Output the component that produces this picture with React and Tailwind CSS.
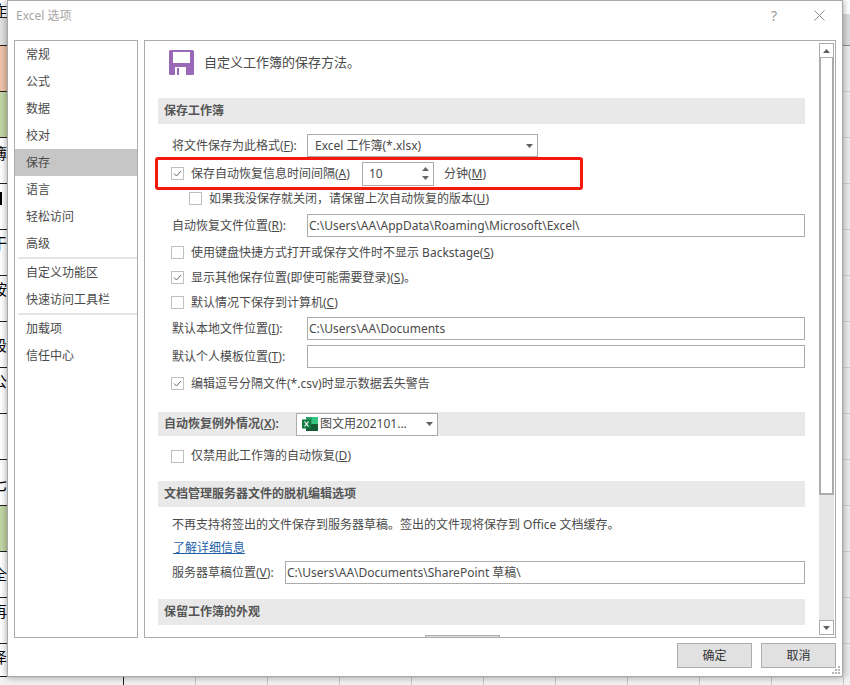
const font = { fontFamily: '"Noto Sans", "Noto Sans CJK SC", sans-serif' };

const sheetRows = [
  { h: 'h-[18px]', bg: 'bg-white', text: '作', pad: 'pt-0' },
  { h: 'h-[28px]', bg: 'bg-[#e2e2e2]', text: '', pad: 'pt-0' },
  { h: 'h-[46px]', bg: 'bg-[#f0c3a8]', text: '', pad: 'pt-0' },
  { h: 'h-[46px]', bg: 'bg-[#c3d7a5]', text: '', pad: 'pt-0' },
  { h: 'h-[46px]', bg: 'bg-white', text: '簿', pad: 'pt-[5px]' },
  { h: 'h-[46px]', bg: 'bg-white', text: '', pad: 'pt-[8px]', mark: true },
  { h: 'h-[46px]', bg: 'bg-white', text: '干', pad: 'pt-[3px]' },
  { h: 'h-[46px]', bg: 'bg-white', text: '按', pad: 'pt-[3px]' },
  { h: 'h-[46px]', bg: 'bg-white', text: '段', pad: 'pt-[13px]' },
  { h: 'h-[46px]', bg: 'bg-white', text: '公', pad: 'pt-[3px]' },
  { h: 'h-[46px]', bg: 'bg-white', text: '', pad: 'pt-0' },
  { h: 'h-[46px]', bg: 'bg-white', text: '七', pad: 'pt-[14px]' },
  { h: 'h-[46px]', bg: 'bg-[#c3d7a5]', text: '', pad: 'pt-0' },
  { h: 'h-[46px]', bg: 'bg-white', text: '全', pad: 'pt-[12px]' },
  { h: 'h-[46px]', bg: 'bg-white', text: '再', pad: 'pt-[3px]' },
  { h: 'h-[33px]', bg: 'bg-white', text: '泽', pad: 'pt-[3px]' },
];

const navTop = ['常规', '公式', '数据', '校对', '保存', '语言', '轻松访问', '高级'];
const navMid = ['自定义功能区', '快速访问工具栏'];
const navEnd = ['加载项', '信任中心'];

function NavItem({ label }) {
  const active = label === '保存';
  return (
    <div className={`h-[27px] pl-[11px] flex items-center text-[12px] text-[#4a4a4a] ${active ? 'bg-[#c6c6c6]' : ''}`}>
      {label}
    </div>
  );
}

function Checkbox({ checked }) {
  return (
    <span className="w-[13px] h-[13px] shrink-0 border border-[#c0c0c0] bg-white flex items-center justify-center">
      {checked && (
        <svg width="11" height="11" viewBox="0 0 11 11" fill="none">
          <path d="M2 5.5 L4.5 8 L9 3" stroke="#666" strokeWidth="1" />
        </svg>
      )}
    </span>
  );
}

function CheckRow({ checked, className, children }) {
  return (
    <div className={`flex items-center gap-[7px] text-[12px] text-[#4a4a4a] ${className}`}>
      <Checkbox checked={checked} />
      <span>{children}</span>
    </div>
  );
}

function SectionBar({ className, children }) {
  return (
    <div className={`w-[647px] bg-[#e9e9e9] pl-[6px] flex items-center text-[12px] font-semibold text-[#555] ${className}`}>
      {children}
    </div>
  );
}

function Caret() {
  return (
    <svg width="7" height="4" viewBox="0 0 7 4">
      <path d="M0 0 H7 L3.5 4 Z" fill="#606060" />
    </svg>
  );
}

function TextBox({ className, children }) {
  return (
    <div className={`h-[23px] border border-[#ababab] bg-white pl-[1px] flex items-center text-[12px] text-[#4a4a4a] ${className}`}>
      {children}
    </div>
  );
}

function ExcelIcon() {
  return (
    <svg width="16" height="16" viewBox="0 0 16 16" className="shrink-0">
      <rect x="4" y="1" width="12" height="14" fill="#21a366" />
      <rect x="10" y="1" width="6" height="7" fill="#33c481" />
      <rect x="4" y="8" width="12" height="7" fill="#185c37" />
      <rect x="0" y="3.5" width="9" height="9" fill="#107c41" />
      <path d="M2.5 5.5 L6.5 10.5 M6.5 5.5 L2.5 10.5" stroke="#fff" strokeWidth="1.2" />
    </svg>
  );
}

function SaveIcon() {
  return (
    <svg width="25" height="25" viewBox="0 0 25 25" className="shrink-0">
      <rect width="25" height="25" rx="1.5" fill="#9a68b6" />
      <rect x="4" y="2" width="17" height="11" fill="#fff" />
      <rect x="6" y="17" width="11" height="8" fill="#fff" />
      <rect x="8" y="18" width="2" height="7" fill="#9a68b6" />
    </svg>
  );
}

function Scrollbar() {
  return (
    <div className="w-[15px] mt-[2px] mb-[2px] mr-[1px] flex flex-col">
      <div className="h-[15px] border border-[#ababab] bg-white flex items-center justify-center">
        <svg width="7" height="4" viewBox="0 0 7 4">
          <path d="M0 4 H7 L3.5 0 Z" fill="#606060" />
        </svg>
      </div>
      <div className="h-[437px] border-2 border-t-0 border-[#ababab] bg-white" />
      <div className="flex-1 bg-[#e6e6e6]" />
      <div className="h-[15px] border border-[#ababab] bg-white flex items-center justify-center">
        <Caret />
      </div>
    </div>
  );
}

export default function App() {
  return (
    <div className="w-[850px] h-[685px] overflow-hidden bg-white flex flex-col" style={font}>
      <div className="flex h-[677px]">
        <div className="w-[7px] shrink-0 flex flex-col">
          {sheetRows.map((row, i) => (
            <div
              key={i}
              className={`${row.h} ${row.bg} ${row.pad} shrink-0 border-b border-[#222] flex items-start ${row.mark ? 'justify-start' : 'justify-end'} overflow-hidden text-[15px] leading-[20px] text-black`}
            >
              {row.mark ? <div className="w-[2px] h-[13px] bg-black" /> : <span className="shrink-0">{row.text}</span>}
            </div>
          ))}
        </div>

        <div className="relative z-10 w-[836px] shrink-0 bg-white border border-[#a8a8a8] shadow-[0_0_7px_rgba(0,0,0,0.4)] flex flex-col">
          <div className="h-[39px] shrink-0 flex items-start pl-[8px] pt-[6px] text-[12px] text-[#a6a6a6]">
            <span className="leading-[18px]">Excel 选项</span>
            <span className="ml-auto mr-[37px] text-[14px] leading-[18px] text-[#999]">?</span>
            <svg width="11" height="11" viewBox="0 0 11 11" className="mr-[17px] mt-[3px]">
              <path d="M0.5 0.5 L10.5 10.5 M10.5 0.5 L0.5 10.5" stroke="#8a8a8a" strokeWidth="1" />
            </svg>
          </div>

          <div className="h-[598px] shrink-0 flex gap-[6px] pl-[6px]">
            <div className="w-[124px] border border-[#ababab] flex flex-col">
              {navTop.map((n) => <NavItem key={n} label={n} />)}
              <div className="h-[2px] ml-[3px] bg-[#e6e6e6]" />
              {navMid.map((n) => <NavItem key={n} label={n} />)}
              <div className="h-[2px] ml-[3px] bg-[#e6e6e6]" />
              {navEnd.map((n) => <NavItem key={n} label={n} />)}
            </div>

            <div className="w-[692px] border border-[#ababab] flex overflow-hidden">
              <div className="flex-1 overflow-hidden pl-[13px] flex flex-col">
                <div className="h-[57px] shrink-0 flex items-start pt-[9px] pl-[11px] gap-[10px]">
                  <SaveIcon />
                  <span className="text-[13px] leading-[25px] text-[#4a4a4a]">自定义工作簿的保存方法。</span>
                </div>

                <SectionBar className="h-[26px] shrink-0">保存工作簿</SectionBar>

                <div className="h-[23px] shrink-0 mt-[10px] flex items-center pl-[14px] text-[12px] text-[#4a4a4a]">
                  <span className="w-[135px]">将文件保存为此格式(<u>F</u>):</span>
                  <div className="w-[231px] h-[23px] border border-[#ababab] flex items-center pl-[7px] pr-[4px] justify-between">
                    <span>Excel 工作簿(*.xlsx)</span>
                    <Caret />
                  </div>
                </div>

                <div className="w-[428px] h-[33px] shrink-0 -ml-[3px] border-[3px] border-[#f5190d] rounded-[3px] flex items-center pl-[13px] text-[12px] text-[#4a4a4a]">
                  <Checkbox checked />
                  <span className="ml-[7px] w-[171px]">保存自动恢复信息时间间隔(<u>A</u>)</span>
                  <div className="w-[72px] h-[24px] border border-[#ababab] flex items-center pl-[6px] pr-[4px] justify-between">
                    <span>10</span>
                    <div className="flex flex-col gap-[5px]">
                      <svg width="7" height="4" viewBox="0 0 7 4"><path d="M0 4 H7 L3.5 0 Z" fill="#666" /></svg>
                      <svg width="7" height="4" viewBox="0 0 7 4"><path d="M0 0 H7 L3.5 4 Z" fill="#666" /></svg>
                    </div>
                  </div>
                  <span className="ml-[10px]">分钟(<u>M</u>)</span>
                </div>

                <CheckRow className="h-[17px] shrink-0 pl-[31px]">如果我没保存就关闭，请保留上次自动恢复的版本(<u>U</u>)</CheckRow>

                <div className="h-[23px] shrink-0 mt-[7px] flex items-center pl-[14px] text-[12px] text-[#4a4a4a]">
                  <span className="w-[135px]">自动恢复文件位置(<u>R</u>):</span>
                  <TextBox className="w-[498px]">C:\Users\AA\AppData\Roaming\Microsoft\Excel\</TextBox>
                </div>

                <CheckRow className="h-[25px] shrink-0 mt-[3px] pl-[13px]">使用键盘快捷方式打开或保存文件时不显示 Backstage(<u>S</u>)</CheckRow>
                <CheckRow checked className="h-[25px] shrink-0 pl-[13px]">显示其他保存位置(即使可能需要登录)(<u>S</u>)。</CheckRow>
                <CheckRow className="h-[25px] shrink-0 pl-[13px]">默认情况下保存到计算机(<u>C</u>)</CheckRow>

                <div className="h-[23px] shrink-0 mt-[2px] flex items-center pl-[14px] text-[12px] text-[#4a4a4a]">
                  <span className="w-[135px]">默认本地文件位置(<u>I</u>):</span>
                  <TextBox className="w-[498px]">C:\Users\AA\Documents</TextBox>
                </div>
                <div className="h-[23px] shrink-0 mt-[5px] flex items-center pl-[14px] text-[12px] text-[#4a4a4a]">
                  <span className="w-[135px]">默认个人模板位置(<u>T</u>):</span>
                  <TextBox className="w-[498px]" />
                </div>

                <CheckRow checked className="h-[25px] shrink-0 mt-[3px] pl-[13px]">编辑逗号分隔文件(*.csv)时显示数据丢失警告</CheckRow>

                <SectionBar className="h-[24px] shrink-0 mt-[16px]">
                  <span className="w-[132px]">自动恢复例外情况(<u>X</u>):</span>
                  <div className="w-[142px] h-[23px] border border-[#ababab] bg-white flex items-center pl-[5px] pr-[4px] font-normal text-[#4a4a4a]">
                    <ExcelIcon />
                    <span className="ml-[2px]">图文用202101...</span>
                    <span className="ml-auto"><Caret /></span>
                  </div>
                </SectionBar>

                <CheckRow className="h-[24px] shrink-0 mt-[8px] pl-[13px]">仅禁用此工作簿的自动恢复(<u>D</u>)</CheckRow>

                <SectionBar className="h-[26px] shrink-0 mt-[13px]">文档管理服务器文件的脱机编辑选项</SectionBar>

                <div className="h-[24px] shrink-0 mt-[6px] pl-[14px] flex items-center text-[12px] text-[#4a4a4a]">
                  不再支持将签出的文件保存到服务器草稿。签出的文件现将保存到 Office 文档缓存。
                </div>
                <div className="h-[22px] shrink-0 pl-[15px] flex items-center text-[12px] text-[#1e5fa8] underline">了解详细信息</div>

                <div className="h-[23px] shrink-0 mt-[2px] flex items-center pl-[14px] text-[12px] text-[#4a4a4a]">
                  <span className="w-[113px]">服务器草稿位置(<u>V</u>):</span>
                  <TextBox className="w-[520px]">C:\Users\AA\Documents\SharePoint 草稿\</TextBox>
                </div>

                <SectionBar className="h-[26px] shrink-0 mt-[15px]">保留工作簿的外观</SectionBar>

                <div className="w-[75px] h-[20px] shrink-0 mt-[10px] ml-[267px] border border-[#ababab] bg-[#e1e1e1]" />
              </div>
              <Scrollbar />
            </div>
          </div>

          <div className="flex-1 relative flex items-start justify-end gap-[9px] pt-[5px] pr-[6px] text-[12px] text-[#333]">
            <button className="w-[75px] h-[25px] border border-[#adadad] bg-[#e1e1e1]">确定</button>
            <button className="w-[75px] h-[25px] border border-[#adadad] bg-[#e1e1e1]">取消</button>
            <svg width="10" height="9" viewBox="0 0 10 9" className="absolute right-[1px] bottom-[1px]">
              <path d="M7 0h2v2H7zM4 3h2v2H4zM7 3h2v2H7zM1 6h2v2H1zM4 6h2v2H4zM7 6h2v2H7z" fill="#b5b5b5" />
            </svg>
          </div>
        </div>

        <div className="w-[7px] shrink-0 flex flex-col bg-[#ececec]">
          <div className="h-[14px] bg-white" />
          <div className="h-[32px] bg-[#dcdcdc] border-b border-[#8c8c8c]" />
          {Array.from({ length: 13 }, (_, i) => (
            <div key={i} className="h-[46px] shrink-0 border-b border-[#cfcfcf]" />
          ))}
        </div>
      </div>

      <div className="flex-1 flex bg-[#f1f1f1]">
        <div className="w-[124px] shrink-0 border-r border-[#222]" />
        {Array.from({ length: 11 }, (_, i) => (
          <div key={i} className="w-[72px] shrink-0 border-r border-[#c8c8c8]" />
        ))}
      </div>
    </div>
  );
}
